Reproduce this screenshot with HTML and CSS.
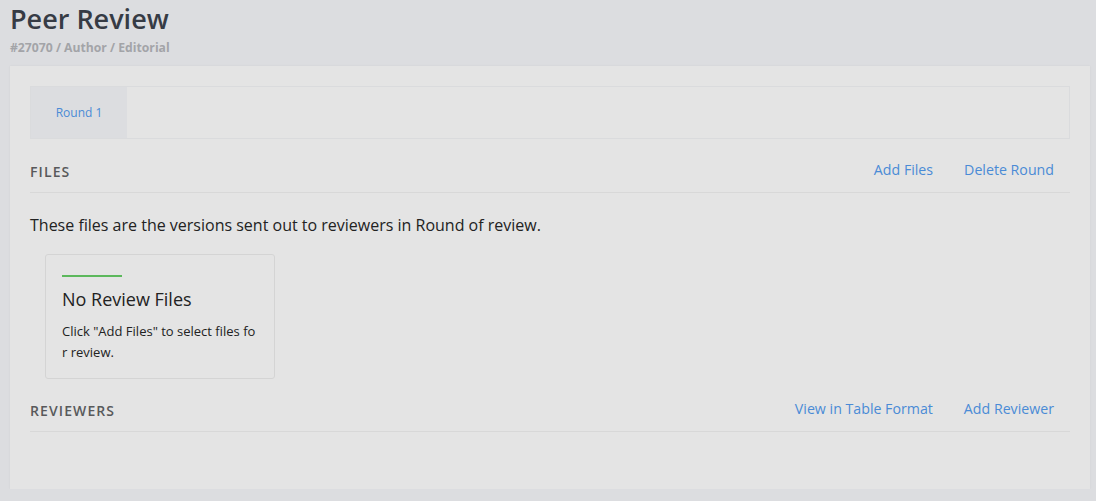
FILE: index.html
```html
<!DOCTYPE html>
<html lang="en">
<head>
  <meta charset="UTF-8">
  <title>Peer Review</title>
  <link rel="stylesheet" href="styles.css">
</head>
<body>

  <header class="page-head">
    <h1>Peer Review</h1>
    <div class="crumbs">#27070 / Author / Editorial</div>
  </header>

  <main class="panel">
    <!-- Rounds -->
    <div class="tabs">
      <a class="tab active" href="#">Round 1</a>
    </div>

    <!-- Files -->
    <div class="section-head">
      <h2>Files</h2>
      <div class="actions">
        <a href="#">Add Files</a>
        <a href="#">Delete Round</a>
      </div>
    </div>
    <p class="intro">These files are the versions sent out to reviewers in Round of review.</p>

    <div class="empty-card">
      <span class="bar"></span>
      <h3>No Review Files</h3>
      <p>Click "Add Files" to select files for review.</p>
    </div>

    <!-- Reviewers -->
    <div class="section-head">
      <h2>Reviewers</h2>
      <div class="actions">
        <a href="#">View in Table Format</a>
        <a href="#">Add Reviewer</a>
      </div>
    </div>
  </main>

</body>
</html>
```

FILE: styles.css
```css
body {
  margin: 0;
  padding: 0 6px 0 10px;
  background: #dcdde0;
  font-family: "Open Sans", sans-serif;
  color: #222;
}

.page-head {
  height: 66px;
}

.page-head h1 {
  margin: 0;
  padding-top: 1px;
  font-size: 27px;
  font-weight: 600;
  line-height: 36px;
  color: #363b45;
}

.crumbs {
  margin-top: 1px;
  font-size: 12.2px;
  font-weight: 700;
  color: #a3a4a8;
  line-height: 20px;
}

.panel {
  background: #e4e4e4;
  padding: 20px 20px 57px;
  box-shadow: 0 0 2px rgba(0, 0, 0, 0.06);
}

.tabs {
  display: flex;
  height: 51px;
  border: 1px solid #dadbdd;
}

.tab {
  display: flex;
  align-items: center;
  justify-content: center;
  width: 96px;
  font-size: 12px;
  color: #4a8bd6;
  text-decoration: none;
}

.tab.active {
  background: #dcdde0;
}

.section-head {
  display: flex;
  align-items: flex-start;
  justify-content: space-between;
  padding: 21px 0 10px;
  line-height: 20px;
  border-bottom: 1px solid #d8d8d8;
}

.empty-card + .section-head {
  padding-top: 20px;
}

.section-head h2 {
  margin: 0;
  padding-top: 2px;
  font-size: 14px;
  font-weight: 600;
  letter-spacing: 1.1px;
  text-transform: uppercase;
  color: #58595b;
}

.actions {
  display: flex;
  gap: 31px;
  padding-right: 16px;
}

.actions a {
  font-size: 14.2px;
  color: #4a8bd6;
  text-decoration: none;
}

.intro {
  margin: 20px 0 17px;
  font-size: 16px;
  line-height: 24px;
}

.empty-card {
  width: 196px;
  margin-left: 15px;
  padding: 20px 16px 15px;
  border: 1px solid #d4d4d4;
  border-radius: 3px;
}

.bar {
  display: block;
  width: 60px;
  height: 2px;
  background: #5cb85c;
}

.empty-card h3 {
  margin: 9px 0 9px;
  font-size: 18px;
  font-weight: 400;
  line-height: 26px;
}

.empty-card p {
  margin: 0;
  font-size: 13px;
  line-height: 21px;
  word-break: break-all;
}
```
